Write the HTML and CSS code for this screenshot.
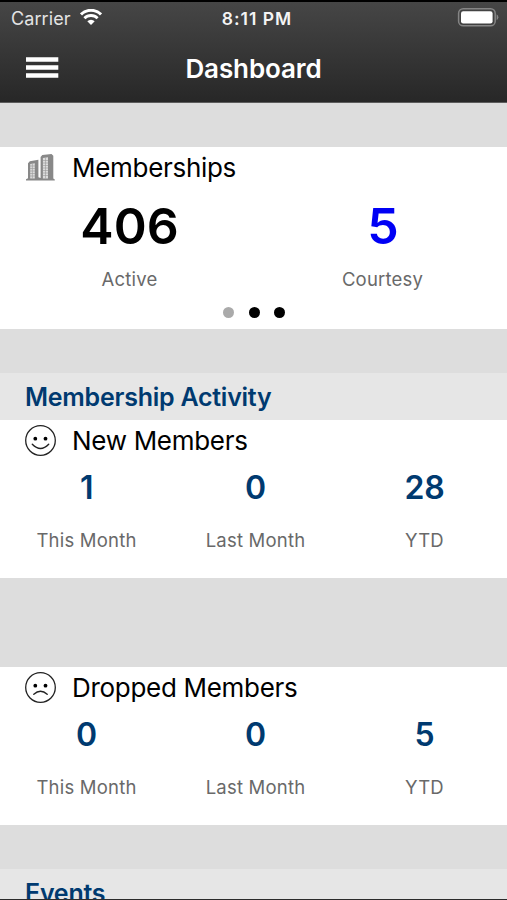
FILE: index.html
```html
<!DOCTYPE html>
<html lang="en">
<head>
<meta charset="utf-8">
<title>Dashboard</title>
<link rel="stylesheet" href="styles.css">
</head>
<body>
<div class="screen">
  <header class="header">
    <div class="status">
      <div class="status-left">
        <span class="carrier">Carrier</span>
        <svg class="wifi" width="22" height="16" viewBox="0 0 22 16">
          <path d="M1 5.4A14.2 14.2 0 0 1 21 5.4" fill="none" stroke="#fff" stroke-width="3"/>
          <path d="M4.4 9.2A9.4 9.4 0 0 1 17.6 9.2" fill="none" stroke="#fff" stroke-width="2.8"/>
          <path d="M11 16L7.3 12.3A5.2 5.2 0 0 1 14.7 12.3Z" fill="#fff"/>
        </svg>
      </div>
      <span class="time">8:11 PM</span>
      <svg class="battery" width="42" height="19" viewBox="0 0 42 19">
        <rect x="1.6" y="0.8" width="36.6" height="17" rx="4.6" fill="none" stroke="#858585" stroke-width="1.5"/>
        <rect x="4" y="3.2" width="31.6" height="12.2" rx="2.2" fill="#fff"/>
        <path d="M39.6 6.3Q41.4 7.2 41.4 9.3T39.6 12.3Z" fill="#858585"/>
      </svg>
    </div>
    <div class="nav">
      <svg class="menu" width="34" height="22" viewBox="0 0 34 22">
        <path d="M1 2.5H33.3M1 10.5H33.3M1 18.5H33.3" stroke="#fff" stroke-width="4.4"/>
      </svg>
      <h1 class="title">Dashboard</h1>
      <span></span>
    </div>
  </header>

  <section class="card summary">
    <h3 class="card-title">
      <svg class="icon" width="32" height="32" viewBox="0 0 32 32">
        <path d="M1 28.5V27.3L3 26.2V11.3L4.8 9.2L13.4 7.8V25.3L15.6 26V5L17.3 3L26.5 2L28.3 3.8V26.5L29.8 27.6V28.5Z" fill="#888"/>
        <path d="M5.2 12L9.8 11.3V26.5H5.2ZM17.9 6L23 5.2V26.5H17.9Z" fill="#dcdcdc"/>
        <path d="M5 14H10M5 16.5H10M5 19H10M5 21.5H10M5 24H10M18 8.5H23M18 11H23M18 13.5H23M18 16H23M18 18.5H23M18 21H23M18 23.5H23M7.4 11.5V26.5M20.5 5.5V26.5" stroke="#989898" stroke-width=".6"/>
      </svg>
      <span>Memberships</span>
    </h3>
    <div class="stats two">
      <div class="stat"><b class="big">406</b><span class="label">Active</span></div>
      <div class="stat"><b class="big blue">5</b><span class="label">Courtesy</span></div>
    </div>
    <div class="dots"><i class="dot off"></i><i class="dot"></i><i class="dot"></i></div>
  </section>

  <h2 class="section-title">Membership Activity</h2>
  <section class="card">
    <h3 class="card-title">
      <svg class="icon" width="32" height="32" viewBox="0 0 32 32">
        <circle cx="15.5" cy="15.5" r="14.8" fill="none" stroke="#222" stroke-width="1.3"/>
        <circle cx="10.3" cy="13.7" r="1.9"/><circle cx="20.5" cy="13.7" r="1.9"/>
        <path d="M7.3 19.3Q15.5 27.7 23.7 19.3" fill="none" stroke="#222" stroke-width="1.4" stroke-linecap="round"/>
      </svg>
      <span>New Members</span>
    </h3>
    <div class="stats three">
      <div class="stat"><b class="num">1</b><span class="label">This Month</span></div>
      <div class="stat"><b class="num">0</b><span class="label">Last Month</span></div>
      <div class="stat"><b class="num">28</b><span class="label">YTD</span></div>
    </div>
  </section>

  <section class="card dropped">
    <h3 class="card-title">
      <svg class="icon" width="32" height="32" viewBox="0 0 32 32">
        <circle cx="15.5" cy="15.5" r="14.8" fill="none" stroke="#222" stroke-width="1.3"/>
        <circle cx="10.3" cy="13.7" r="1.9"/><circle cx="20.5" cy="13.7" r="1.9"/>
        <path d="M8.8 22.2Q15.5 16.4 22.2 22.2" fill="none" stroke="#222" stroke-width="1.4" stroke-linecap="round"/>
      </svg>
      <span>Dropped Members</span>
    </h3>
    <div class="stats three">
      <div class="stat"><b class="num">0</b><span class="label">This Month</span></div>
      <div class="stat"><b class="num">0</b><span class="label">Last Month</span></div>
      <div class="stat"><b class="num">5</b><span class="label">YTD</span></div>
    </div>
  </section>

  <h2 class="section-title events">Events</h2>
</div>
</body>
</html>
```
FILE: styles.css
```css
* { box-sizing: border-box; }
body { margin: 0; background: #ddd; font-family: Inter, "Liberation Sans", sans-serif; color: #000; }
h1, h2, h3 { margin: 0; font-weight: 400; }
svg { display: block; flex: none; }
.screen { height: 900px; overflow: hidden; display: flex; flex-direction: column; border-bottom: 1px solid #2b2b2b; }
.screen > * { flex: none; }

.header { height: 103px; border-top: 2px solid #000; border-bottom: 1px solid #5c5c5c; background: linear-gradient(#464646, #272727); color: #fff; }
.status { height: 32px; display: grid; grid-template-columns: 1fr auto 1fr; align-items: center; padding: 0 8px 0 11px; }
.status-left { display: flex; align-items: center; gap: 9px; }
.carrier { font-size: 18px; color: #e4e4e4; letter-spacing: .1px; }
.wifi { margin-top: -2px; }
.time { font-size: 17.5px; font-weight: 600; letter-spacing: 1px; color: #f4f4f4; padding-left: 4px; }
.battery { justify-self: end; margin-top: -1px; }
.nav { height: 68px; display: grid; grid-template-columns: 1fr auto 1fr; align-items: center; padding: 0 25px; }
.title { font-size: 26px; font-weight: 600; letter-spacing: -.1px; line-height: 32px; padding-top: 1px; }

.card { height: 158px; background: #fff; }
.summary { height: 182px; margin: 44px 0; }
.card-title { height: 41px; display: flex; align-items: center; gap: 15px; padding-left: 25px; font-size: 26px; letter-spacing: -.3px; white-space: nowrap; }
.stats { display: grid; text-align: center; }
.two { grid-template-columns: repeat(2, 253px); padding-left: 3px; }
.three { grid-template-columns: repeat(3, 169px); padding-left: 2px; }
.stat { display: flex; flex-direction: column; align-items: center; }
.big { font-size: 50px; line-height: 76px; margin-bottom: -1px; font-weight: 600; }
.num { font-size: 32px; line-height: 54px; font-weight: 600; letter-spacing: -.3px; color: #003a70; }
.blue { color: #0000f5; padding-left: 1px; }
.label { font-size: 18.5px; line-height: 32px; color: #696969; letter-spacing: .2px; }
.three .label { margin-top: 9px; }
.dots { display: flex; justify-content: center; gap: 14.5px; padding: 12px 0 0 1px; }
.dot { width: 11px; height: 11px; border-radius: 50%; background: #000; }
.off { background: #aaa; }

.section-title { height: 47px; padding-left: 25px; line-height: 49px; background: #e6e6e6; font-size: 25px; font-weight: 600; color: #003a70; letter-spacing: -.25px; }
.dropped { margin: 89px 0 44px; }
.events { height: 30px; overflow: hidden; }
```
